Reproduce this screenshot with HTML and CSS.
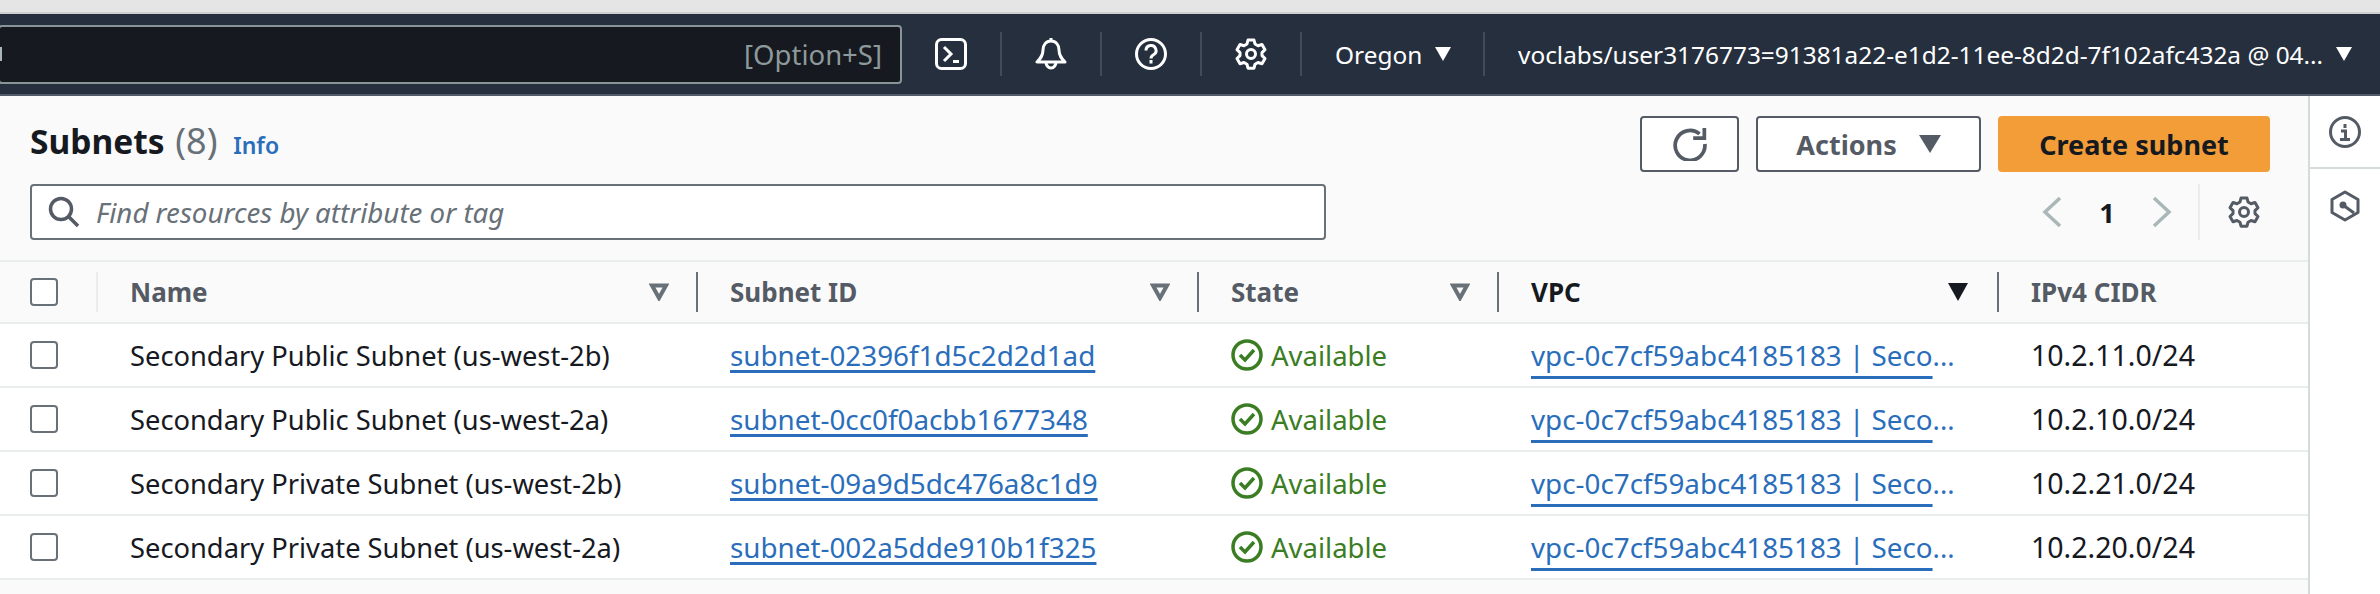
FILE: index.html
```html
<!DOCTYPE html>
<html lang="en">
<head>
  <meta charset="UTF-8" />
  <title>Subnets</title>
  <link rel="stylesheet" href="styles.css">
</head>
<body>

  <div class="browser-strip"></div>

  <!-- TOP NAV -->
  <nav class="top-nav">
    <div class="nav-search">
      <span class="nav-search-stub"></span>
      <span class="nav-search-hint">[Option+S]</span>
    </div>
    <div class="nav-icon">
      <svg width="32" height="32" viewBox="0 0 32 32" fill="none" stroke="#fff" stroke-width="3"><rect x="1.5" y="1.5" width="29" height="29" rx="5"/><path d="M9 9l7 7-7 7M18 23.5h6"/></svg>
    </div>
    <div class="nav-icon">
      <svg width="32" height="32" viewBox="0 0 32 32" fill="none" stroke="#fff" stroke-width="3" stroke-linejoin="round"><path d="M16 3c-5 0-8 4-8 9 0 6-3 9-6 12h28c-3-3-6-6-6-12 0-5-3-9-8-9z"/><path d="M11 24a5 6 0 0 0 10 0M16 0v3"/></svg>
    </div>
    <div class="nav-icon">
      <svg width="32" height="32" viewBox="0 0 32 32" fill="none" stroke="#fff" stroke-width="3"><circle cx="16" cy="16" r="14.5"/><path d="M11 12.500a5 5 0 1 1 7.500 4.300c-1.700 1-2.500 1.800-2.500 3.700"/><path d="M16 22v3.500"/></svg>
    </div>
    <div class="nav-icon">
      <svg width="32" height="32" viewBox="0 0 32 32" fill="none" stroke="#fff" stroke-width="3" stroke-linejoin="round"><path d="M13 2h6l1 4 3 1.700 4-1.200 3 5.200-3 2.900v3l3 2.900-3 5.200-4-1.200-3 1.700-1 4h-6l-1-4-3-1.700-4 1.200-3-5.200 3-2.900v-3l-3-2.900 3-5.200 4 1.200 3-1.700z"/><circle cx="16" cy="16" r="4.500"/></svg>
    </div>
    <div class="nav-menu nav-region">Oregon <span class="nav-caret"></span></div>
    <div class="nav-menu nav-user">voclabs/user3176773=91381a22-e1d2-11ee-8d2d-7f102afc432a @ 04... <span class="nav-caret"></span></div>
  </nav>

  <div class="page">
    <main class="content">

      <header class="panel-head">
        <div class="head-left">
          <h1>Subnets <span class="count">(8)</span> <a class="info-link">Info</a></h1>
          <div class="filter-box">
            <svg class="filter-icon" width="32" height="32" viewBox="0 0 32 32" fill="none" stroke="#545b64" stroke-width="3.500"><circle cx="13" cy="13" r="10.500"/><path d="M21 21l9 9"/></svg>
            <span class="filter-text">Find resources by attribute or tag</span>
          </div>
        </div>
        <div class="head-right">
          <div class="head-actions">
            <button class="btn btn-refresh">
              <svg width="34" height="34" viewBox="0 0 32 32" fill="none" stroke="#545b64" stroke-width="3.500"><path d="M25 6.500a14 14 0 1 0 5 9.500"/><path d="M19 10.500h10.500V1"/></svg>
            </button>
            <button class="btn btn-actions">Actions <span class="btn-caret"></span></button>
            <button class="btn btn-primary">Create subnet</button>
          </div>
          <div class="pager">
            <svg class="pager-arrow" width="24" height="32" viewBox="0 0 24 32" fill="none" stroke="#aab7b8" stroke-width="3.500"><path d="M20 2L5 16l15 14"/></svg>
            <span class="pager-num">1</span>
            <svg class="pager-arrow" width="24" height="32" viewBox="0 0 24 32" fill="none" stroke="#aab7b8" stroke-width="3.500"><path d="M4 2l15 14L4 30"/></svg>
            <div class="pager-gear">
              <svg width="32" height="32" viewBox="0 0 32 32" fill="none" stroke="#545b64" stroke-width="3" stroke-linejoin="round"><path d="M13 2h6l1 4 3 1.700 4-1.200 3 5.200-3 2.900v3l3 2.900-3 5.200-4-1.200-3 1.700-1 4h-6l-1-4-3-1.700-4 1.200-3-5.200 3-2.900v-3l-3-2.900 3-5.200 4 1.200 3-1.700z"/><circle cx="16" cy="16" r="4.500"/></svg>
            </div>
          </div>
        </div>
      </header>

      <table class="subnets">
        <colgroup>
          <col class="col-check"><col class="col-name"><col class="col-id"><col class="col-state"><col class="col-vpc"><col>
        </colgroup>
        <thead>
          <tr>
            <th><span class="check"></span></th>
            <th>Name <svg class="sort" width="20" height="18" viewBox="0 0 20 18"><path d="M3 2.500h14L10 15z" fill="none" stroke="#687078" stroke-width="4"/></svg></th>
            <th>Subnet ID <svg class="sort" width="20" height="18" viewBox="0 0 20 18"><path d="M3 2.500h14L10 15z" fill="none" stroke="#687078" stroke-width="4"/></svg></th>
            <th>State <svg class="sort" width="20" height="18" viewBox="0 0 20 18"><path d="M3 2.500h14L10 15z" fill="none" stroke="#687078" stroke-width="4"/></svg></th>
            <th class="sorted">VPC <svg class="sort sort-on" width="20" height="18" viewBox="0 0 20 18"><path d="M0 0h20L10 18z" fill="#16191f"/></svg></th>
            <th>IPv4 CIDR</th>
          </tr>
        </thead>
        <tbody>
          <tr>
            <td><span class="check"></span></td>
            <td>Secondary Public Subnet (us-west-2b)</td>
            <td><a class="link">subnet-02396f1d5c2d2d1ad</a></td>
            <td><span class="status"><svg width="32" height="32" viewBox="0 0 32 32" fill="none" stroke="#3b7d23" stroke-width="3.500"><circle cx="16" cy="16" r="14"/><path d="M9 16l5 5 9-10"/></svg>Available</span></td>
            <td><span class="vpc-cell"><a class="link vpc-link">vpc-0c7cf59abc4185183 | Seco</a>...</span></td>
            <td class="cidr">10.2.11.0/24</td>
          </tr>
          <tr>
            <td><span class="check"></span></td>
            <td>Secondary Public Subnet (us-west-2a)</td>
            <td><a class="link">subnet-0cc0f0acbb1677348</a></td>
            <td><span class="status"><svg width="32" height="32" viewBox="0 0 32 32" fill="none" stroke="#3b7d23" stroke-width="3.500"><circle cx="16" cy="16" r="14"/><path d="M9 16l5 5 9-10"/></svg>Available</span></td>
            <td><span class="vpc-cell"><a class="link vpc-link">vpc-0c7cf59abc4185183 | Seco</a>...</span></td>
            <td class="cidr">10.2.10.0/24</td>
          </tr>
          <tr>
            <td><span class="check"></span></td>
            <td>Secondary Private Subnet (us-west-2b)</td>
            <td><a class="link">subnet-09a9d5dc476a8c1d9</a></td>
            <td><span class="status"><svg width="32" height="32" viewBox="0 0 32 32" fill="none" stroke="#3b7d23" stroke-width="3.500"><circle cx="16" cy="16" r="14"/><path d="M9 16l5 5 9-10"/></svg>Available</span></td>
            <td><span class="vpc-cell"><a class="link vpc-link">vpc-0c7cf59abc4185183 | Seco</a>...</span></td>
            <td class="cidr">10.2.21.0/24</td>
          </tr>
          <tr>
            <td><span class="check"></span></td>
            <td>Secondary Private Subnet (us-west-2a)</td>
            <td><a class="link">subnet-002a5dde910b1f325</a></td>
            <td><span class="status"><svg width="32" height="32" viewBox="0 0 32 32" fill="none" stroke="#3b7d23" stroke-width="3.500"><circle cx="16" cy="16" r="14"/><path d="M9 16l5 5 9-10"/></svg>Available</span></td>
            <td><span class="vpc-cell"><a class="link vpc-link">vpc-0c7cf59abc4185183 | Seco</a>...</span></td>
            <td class="cidr">10.2.20.0/24</td>
          </tr>
        </tbody>
      </table>
    </main>

    <aside class="side-rail">
      <div class="rail-item">
        <svg width="32" height="32" viewBox="0 0 32 32" fill="none" stroke="#545b64" stroke-width="3"><circle cx="16" cy="16" r="14.500"/><path d="M16 8v4M12 15h4.500v8M11 23.500h10"/></svg>
      </div>
      <div class="rail-item">
        <svg width="32" height="32" viewBox="0 0 32 32" fill="none" stroke="#545b64" stroke-width="3" stroke-linejoin="round"><path d="M16 2l13 7.500v13L16 30 3 22.500v-13z"/><path d="M14 15l11 8"/><circle cx="14" cy="15" r="3.500" fill="#545b64" stroke="none"/></svg>
      </div>
    </aside>
  </div>

</body>
</html>
```

FILE: styles.css
```css
* {
  box-sizing: border-box;
}

body {
  margin: 0;
  height: 594px;
  overflow: hidden;
  background: #fff;
  font-family: 'Noto Sans', sans-serif;
  font-size: 27.3px;
  color: #16191f;
}

.browser-strip {
  height: 14px;
  background-color: #e5e5e5;
  border-bottom: 2px solid #cfcfcf;
}

/* TOP NAV */
.top-nav {
  display: flex;
  align-items: center;
  height: 82px;
  background-color: #252f3e;
  border-bottom: 2px solid #4f5967;
  color: #fff;
}

.nav-search {
  display: flex;
  align-items: center;
  justify-content: space-between;
  width: 904px;
  height: 59px;
  margin-left: -2px;
  padding-right: 18px;
  background-color: #16191f;
  border: 2px solid #879596;
  border-radius: 4px;
  font-size: 27.5px;
  color: #8d9a9b;
}

.nav-search-stub {
  width: 2px;
  height: 14px;
  background-color: #a9b5b6;
}

.nav-icon {
  display: flex;
  align-items: center;
  justify-content: center;
  width: 100px;
  height: 44px;
  border-right: 2px solid #414b5a;
}

.nav-menu {
  display: flex;
  align-items: center;
  gap: 13px;
  height: 44px;
  white-space: nowrap;
  font-size: 24.4px;
}

.nav-region {
  width: 183px;
  padding-left: 33px;
  border-right: 2px solid #414b5a;
}

.nav-user {
  padding-left: 33px;
}

.nav-caret {
  width: 0;
  height: 0;
  border-left: 8px solid transparent;
  border-right: 8px solid transparent;
  border-top: 14px solid #fff;
}

/* PAGE */
.page {
  display: flex;
  height: 498px;
}

.content {
  flex: 1;
  background-color: #fafafa;
}

.side-rail {
  width: 72px;
  background-color: #fff;
  border-left: 2px solid #d5dbdb;
}

.rail-item {
  display: flex;
  align-items: center;
  justify-content: center;
  height: 73px;
  border-bottom: 2px solid #d5dbdb;
}

.rail-item:last-child {
  border-bottom: none;
}

/* PANEL HEADER */
.panel-head {
  display: flex;
  justify-content: space-between;
  height: 166px;
  padding: 20px 38px 0 30px;
  border-bottom: 2px solid #eaeded;
}

h1 {
  height: 48px;
  margin: 0;
  font-size: 33.5px;
  font-weight: 700;
  line-height: 50px;
}

.count {
  margin-left: 2px;
  font-size: 36px;
  font-weight: 400;
  color: #687078;
}

.info-link {
  margin-left: 7px;
  font-size: 23px;
  font-weight: 600;
  color: #2a6ebb;
}

.filter-box {
  display: flex;
  align-items: center;
  width: 1296px;
  height: 56px;
  margin-top: 20px;
  padding-left: 16px;
  background-color: #fff;
  border: 2px solid #687078;
  border-radius: 4px;
}

.filter-text {
  margin-left: 16px;
  font-size: 27.7px;
  font-style: italic;
  color: #687078;
}

.head-right {
  display: flex;
  flex-direction: column;
  align-items: flex-end;
}

.head-actions {
  display: flex;
  gap: 17px;
}

.btn {
  display: flex;
  align-items: center;
  justify-content: center;
  height: 56px;
  border-radius: 4px;
  font-family: inherit;
  font-size: 27px;
  font-weight: 700;
}

.btn-refresh,
.btn-actions {
  background-color: #fff;
  border: 2px solid #545b64;
  color: #545b64;
}

.btn-refresh {
  width: 99px;
}

.btn-actions {
  width: 225px;
  gap: 22px;
}

.btn-caret {
  width: 0;
  height: 0;
  border-left: 11px solid transparent;
  border-right: 11px solid transparent;
  border-top: 18px solid #545b64;
}

.btn-primary {
  width: 272px;
  background-color: #f29d38;
  border: none;
  color: #16191f;
}

.pager {
  display: flex;
  align-items: center;
  height: 56px;
  margin-top: 12px;
}

.pager-num {
  width: 86px;
  text-align: center;
  font-weight: 700;
}

.pager-gear {
  display: flex;
  align-items: center;
  justify-content: flex-end;
  width: 62px;
  height: 56px;
  margin-left: 24px;
  margin-right: 10px;
  border-left: 2px solid #eaeded;
}

/* TABLE */
.subnets {
  width: 100%;
  border-collapse: separate;
  border-spacing: 0;
  table-layout: fixed;
}

.col-check { width: 96px; }
.col-name { width: 600px; }
.col-id { width: 501px; }
.col-state { width: 300px; }
.col-vpc { width: 500px; }

.subnets th {
  position: relative;
  height: 62px;
  padding: 0 0 0 34px;
  text-align: left;
  font-size: 26px;
  font-weight: 700;
  color: #545b64;
  border-bottom: 2px solid #eaeded;
}

.subnets th:first-child,
.subnets td:first-child {
  padding-left: 30px;
}

.subnets th.sorted {
  color: #16191f;
}

.subnets th + th::before {
  content: "";
  position: absolute;
  left: 0;
  top: 10px;
  bottom: 10px;
  width: 2px;
  background-color: #687078;
}

.subnets th:nth-child(2)::before {
  background-color: #eaeded;
}

.sort {
  position: absolute;
  right: 27px;
  top: 21px;
}

.sort-on {
  right: 29px;
}

.subnets td {
  height: 64px;
  padding: 0 0 0 34px;
  background-color: #fff;
  border-bottom: 2px solid #eaeded;
  white-space: nowrap;
}

.check {
  display: block;
  width: 28px;
  height: 28px;
  background-color: #fff;
  border: 2px solid #687078;
  border-radius: 4px;
}

.link {
  font-size: 27.8px;
  color: #2a6ebb;
  text-decoration: underline;
  text-decoration-thickness: 3px;
  text-underline-offset: 4px;
}

.status {
  display: flex;
  align-items: center;
  gap: 8px;
  font-size: 27.5px;
  color: #3b7d23;
}

.vpc-cell {
  color: #2a6ebb;
}

.vpc-link {
  text-underline-offset: 10px;
}

.cidr {
  font-size: 28.5px;
}
```
